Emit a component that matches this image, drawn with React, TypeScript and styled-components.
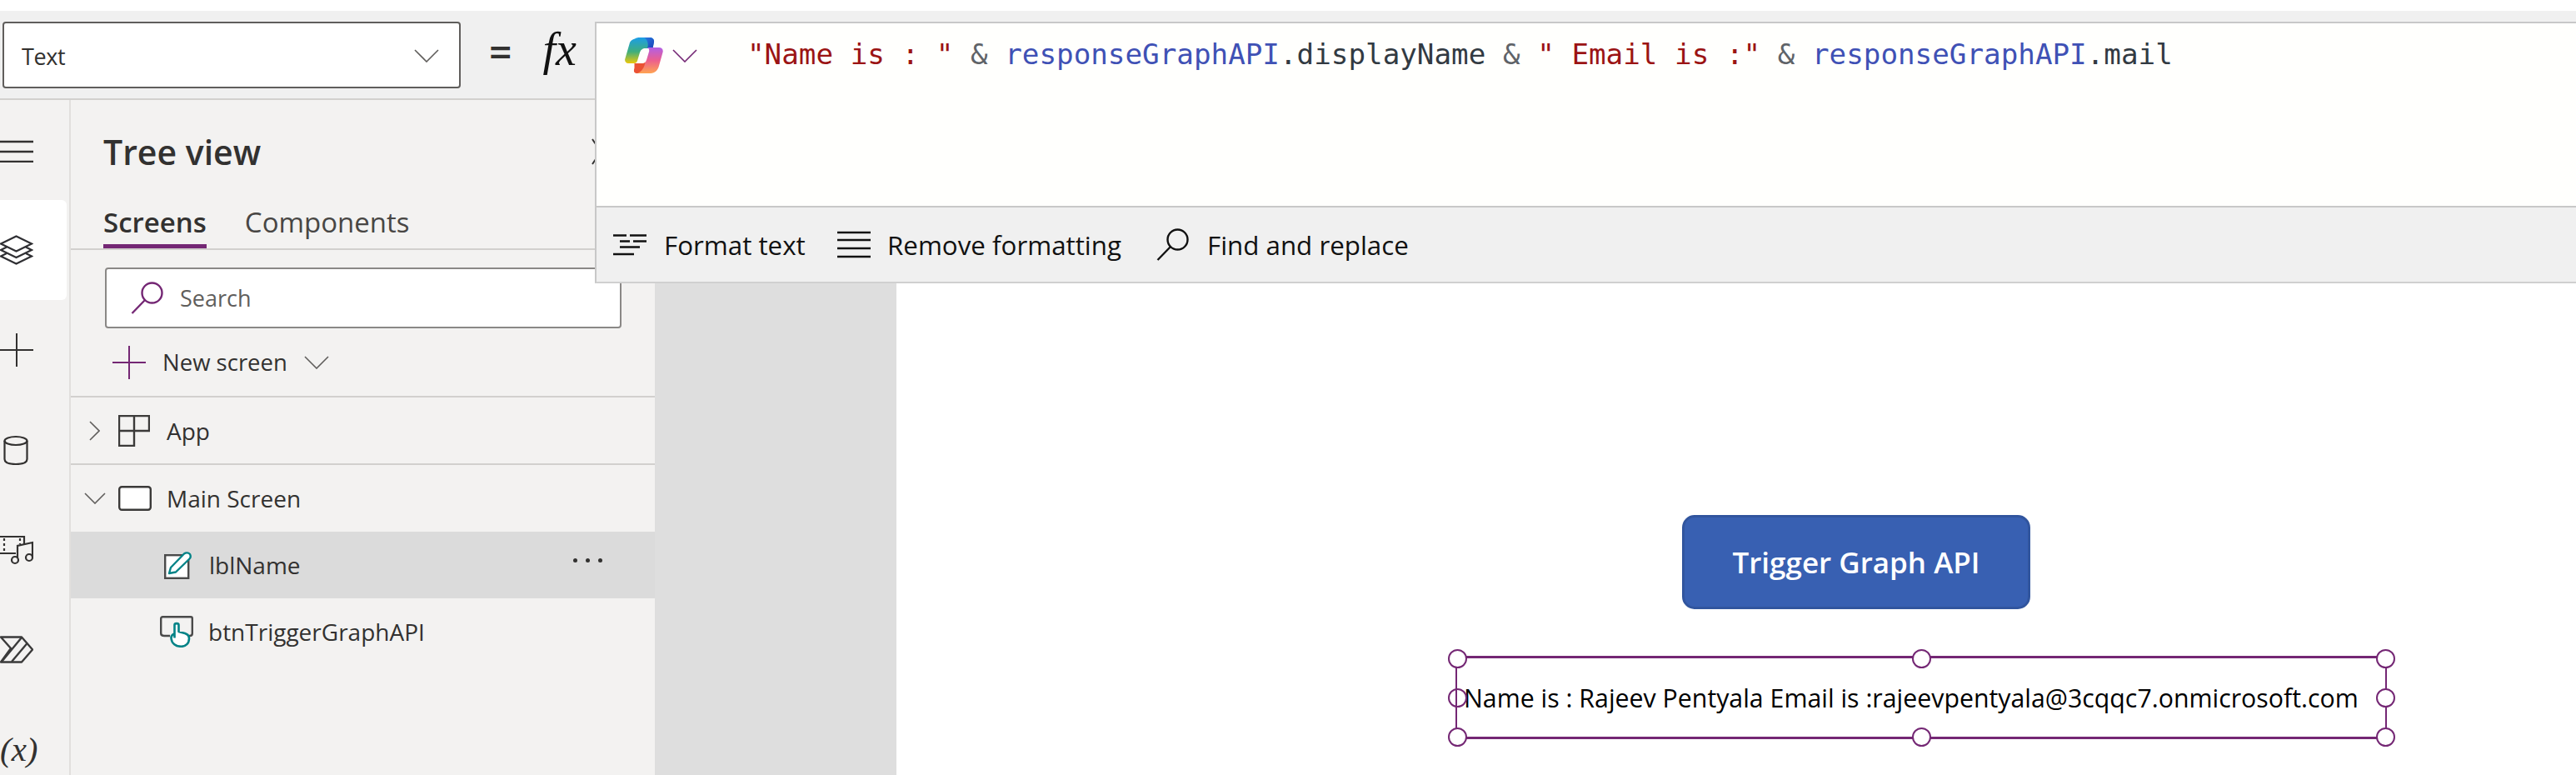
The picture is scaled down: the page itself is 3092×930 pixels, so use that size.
import React from "react";
import styled, { createGlobalStyle } from "styled-components";

const GlobalStyle = createGlobalStyle`
  html, body {
    margin: 0;
    padding: 0;
    background: #fff;
    font-family: "Open Sans", "Noto Sans", sans-serif;
  }
  * { box-sizing: border-box; }
`;

const Page = styled.div`
  position: relative;
  width: 3092px;
  height: 930px;
  padding-top: 13px;
  overflow: hidden;
  display: flex;
  flex-direction: column;
`;

// ---- formula bar ----
const FormulaBar = styled.div`
  height: 107px;
  flex: none;
  background: #f0f0f0;
  border-bottom: 2px solid #d2d0ce;
  padding: 13px 0 0 3px;
  display: flex;
  align-items: flex-start;
`;

const PropertySelect = styled.div`
  width: 550px;
  height: 80px;
  background: #fff;
  border: 2px solid #605e5c;
  border-radius: 4px;
  padding: 2px 24px 0 21px;
  display: flex;
  align-items: center;
  justify-content: space-between;
  font-size: 27px;
  letter-spacing: -0.4px;
  color: #323130;
`;

const Equals = styled.span`
  margin-left: 34px;
  font-size: 48px;
  font-weight: 600;
  line-height: 72px;
  color: #323130;
`;

const FxLabel = styled.span`
  margin-left: 37px;
  font-family: "Liberation Serif", serif;
  font-style: italic;
  font-size: 56px;
  line-height: 66px;
  color: #111;
`;

// ---- formula popover, lies over tree view and canvas ----
const FormulaPanel = styled.div`
  position: absolute;
  left: 714px;
  top: 26px;
  right: 0;
  height: 314px;
  display: flex;
  flex-direction: column;
  border: 2px solid #c8c8c8;
  border-right: none;
  border-bottom-color: #d0d0d0;
  background: #fffffd;
  z-index: 5;
`;

const EditorArea = styled.div`
  flex: 1;
  padding: 17px 0 0 34px;
  display: flex;
  align-items: flex-start;
`;

const CopilotButton = styled.div`
  display: flex;
  align-items: center;
  gap: 11px;
  width: 147px;
  flex: none;
`;

const Code = styled.div`
  font-family: "DejaVu Sans Mono", monospace;
  font-size: 34.24px;
  line-height: 40px;
  white-space: pre;
  color: #323a42;
`;

const Token = styled.span<{ $kind: "str" | "id" | "op" }>`
  color: ${(p) => (p.$kind === "str" ? "#9b1414" : p.$kind === "id" ? "#3f51b5" : "#5f6368")};
`;

const FormatBar = styled.div`
  height: 91px;
  flex: none;
  background: #f0f0f0;
  border-top: 2px solid #c8c8c8;
  padding-left: 20px;
  display: flex;
  align-items: center;
`;

const FormatAction = styled.div<{ $gap: number; $width: number }>`
  display: flex;
  align-items: center;
  gap: ${(p) => p.$gap}px;
  width: ${(p) => p.$width}px;
  flex: none;
  font-size: 31.3px;
  color: #111;
  white-space: nowrap;
`;

// ---- main area ----
const Main = styled.div`
  flex: 1;
  min-height: 0;
  display: flex;
`;

const Rail = styled.nav`
  width: 85px;
  flex: none;
  background: #f3f2f1;
  border-right: 2px solid #e1dfdd;
  display: flex;
  flex-direction: column;
`;

const RailItem = styled.div<{ $active?: boolean }>`
  width: 80px;
  height: 120px;
  flex: none;
  display: flex;
  align-items: center;
  background: ${(p) => (p.$active ? "#fff" : "transparent")};
  border-radius: 0 6px 6px 0;
  color: #323130;
`;

const VarGlyph = styled.span`
  font-family: "Liberation Serif", serif;
  font-style: italic;
  font-size: 41px;
  line-height: 1;
  color: #323130;
  margin-top: -2px;
`;

const TreePanel = styled.aside`
  width: 701px;
  flex: none;
  background: #f3f2f1;
  display: flex;
  flex-direction: column;
  color: #323130;
`;

const TreeHeader = styled.div`
  height: 120px;
  flex: none;
  padding: 4px 54px 0 39px;
  display: flex;
  align-items: center;
  justify-content: space-between;
  font-size: 41px;
  font-weight: 600;
`;

const TabRow = styled.div`
  height: 60px;
  flex: none;
  padding-left: 39px;
  border-bottom: 2px solid #d2d0ce;
  display: flex;
  gap: 46px;
`;

const Tab = styled.div<{ $active?: boolean }>`
  height: 58px;
  padding-top: 4px;
  font-size: 33px;
  line-height: 46px;
  font-weight: ${(p) => (p.$active ? 600 : 400)};
  color: ${(p) => (p.$active ? "#323130" : "#484644")};
  border-bottom: 5px solid ${(p) => (p.$active ? "#742774" : "transparent")};
`;

const SearchBox = styled.div`
  margin: 21px 0 0 41px;
  width: 620px;
  height: 73px;
  flex: none;
  background: #fff;
  border: 2px solid #8a8886;
  border-radius: 4px;
  padding-left: 29px;
  display: flex;
  align-items: center;
  gap: 20px;
  font-size: 27px;
  color: #605e5c;
`;

const NewScreenRow = styled.div`
  height: 83px;
  flex: none;
  padding-left: 50px;
  border-bottom: 2px solid #d2d0ce;
  display: flex;
  align-items: center;
  gap: 20px;
  font-size: 27.5px;
`;

const TreeRow = styled.div<{ $selected?: boolean; $divider?: boolean }>`
  position: relative;
  height: ${(p) => (p.$divider ? 81 : 80)}px;
  flex: none;
  display: flex;
  align-items: center;
  background: ${(p) => (p.$selected ? "#dbdbdb" : "transparent")};
  border-bottom: ${(p) => (p.$divider ? "2px solid #d2d0ce" : "none")};
  font-size: 28px;
  color: #323130;
`;

const Twisty = styled.span`
  width: 57px;
  flex: none;
  display: flex;
  justify-content: center;
`;

const RowLabel = styled.span<{ $left: number }>`
  margin-left: ${(p) => p.$left}px;
  white-space: nowrap;
`;

const RowIndent = styled.span<{ $width: number }>`
  width: ${(p) => p.$width}px;
  flex: none;
`;

const MoreDots = styled.span`
  position: absolute;
  right: 63px;
  top: 32px;
  display: flex;
  gap: 10px;
`;

const Dot = styled.i`
  width: 5px;
  height: 5px;
  border-radius: 50%;
  background: #323130;
`;

const Gutter = styled.div`
  width: 290px;
  flex: none;
  background: #dedede;
`;

const Canvas = styled.main`
  flex: 1;
  background: #fff;
  padding-top: 498px;
  display: flex;
  flex-direction: column;
`;

const TriggerButton = styled.div`
  margin-left: 943px;
  width: 418px;
  height: 113px;
  flex: none;
  background: #3860b2;
  border: 3px solid #31559e;
  border-radius: 15px;
  display: flex;
  align-items: center;
  justify-content: center;
  color: #fff;
  font-size: 35px;
  font-weight: 600;
`;

const SelectedLabel = styled.div`
  position: relative;
  margin: 56px 0 0 671px;
  width: 1118px;
  height: 100px;
  flex: none;
  border-style: solid;
  border-color: #742774;
  border-width: 3px 2px;
  padding-left: 8px;
  display: flex;
  align-items: center;
  font-size: 30.3px;
  color: #000;
  white-space: nowrap;
`;

const Handle = styled.span<{ $x: number; $y: number }>`
  position: absolute;
  left: ${(p) => p.$x}%;
  top: ${(p) => p.$y}%;
  width: 23px;
  height: 23px;
  margin: -11.5px 0 0 -11.5px;
  border: 2px solid #742774;
  border-radius: 50%;
  background: #fff;
`;

const HandleHollow = styled(Handle)`
  background: transparent;
`;

// ---- drawn icons ----
const Chevron = ({ w, h, dir = "down", color = "#605e5c" }: { w: number; h: number; dir?: "down" | "right"; color?: string }) => (
  <svg width={w} height={h} viewBox={`0 0 ${w} ${h}`} fill="none" stroke={color} strokeWidth="1.6">
    {dir === "down" ? (
      <path d={`M1 1L${w / 2} ${h - 1}L${w - 1} 1`} />
    ) : (
      <path d={`M1 1L${w - 1} ${h / 2}L1 ${h - 1}`} />
    )}
  </svg>
);

const PlusIcon = ({ color }: { color: string }) => (
  <svg width="40" height="40" viewBox="0 0 40 40" stroke={color} strokeWidth="2" fill="none">
    <path d="M0 20H40M20 0V40" />
  </svg>
);

const SearchIcon = ({ color, size }: { color: string; size: number }) => (
  <svg width={size} height={size} viewBox="0 0 39 39" fill="none" stroke={color} strokeWidth="2.4">
    <circle cx="25.5" cy="13.5" r="12" />
    <path d="M17 22L1.5 38" />
  </svg>
);

const HamburgerIcon = () => (
  <svg width="40" height="30" viewBox="0 0 40 30" stroke="#323130" strokeWidth="2.6">
    <path d="M0 5H40M0 17H40M0 29H40" />
  </svg>
);

const LayersIcon = () => (
  <svg width="40" height="36" viewBox="0 0 40 36" fill="none" stroke="#2f2f33" strokeWidth="2.2" strokeLinejoin="miter">
    <path d="M19.5 1.5L38 10.5L19.5 19.5L1 10.5Z" />
    <path d="M8 14.5L1 18L19.5 27L38 18L31 14.5" />
    <path d="M8 22L1 25.5L19.5 34.5L38 25.5L31 22" />
  </svg>
);

const CylinderIcon = () => (
  <svg width="40" height="36" viewBox="0 0 40 36" fill="none" stroke="#323130" strokeWidth="2.2">
    <ellipse cx="19" cy="7" rx="13.5" ry="5" />
    <path d="M5.5 7V29C5.5 33 10 35 19 35C28 35 32.5 33 32.5 29V7" />
  </svg>
);

const MediaIcon = () => (
  <svg width="40" height="36" viewBox="0 0 40 36" fill="none" stroke="#323130" strokeWidth="2.2">
    <path d="M0 2H29V11M19 22H0" />
    <path d="M5 4V20M24 4V11" strokeDasharray="3 3" />
    <path d="M21 28V13L39 9V26" />
    <circle cx="18" cy="30" r="4" />
    <circle cx="35" cy="27" r="4" />
  </svg>
);

const AutomateIcon = () => (
  <svg width="40" height="34" viewBox="0 0 40 34" fill="none" stroke="#3a3a3a" strokeWidth="2.4" strokeLinejoin="round">
    <path d="M1 1.5H26L39 16.5L26 31.5H1L13 15Z" />
    <path d="M26 2L2 31M33 8.5L14 31" />
  </svg>
);

const AppIcon = () => (
  <svg width="38" height="38" viewBox="0 0 38 38" fill="none" stroke="#3b3a39" strokeWidth="2.4">
    <path d="M1 1H37V19H19V37H1ZM1 19H19V1" />
  </svg>
);

const ScreenIcon = () => (
  <svg width="40" height="30" viewBox="0 0 40 30">
    <rect x="1.2" y="1.2" width="37.6" height="27.6" rx="3" fill="#fff" stroke="#3b3a39" strokeWidth="2.4" />
  </svg>
);

const LabelEditIcon = () => (
  <svg width="33" height="33" viewBox="0 0 33 33" fill="none">
    <rect x="1.2" y="4.2" width="28" height="27.6" fill="#fff" stroke="#4a4a4a" strokeWidth="2.4" />
    <path d="M6 26L8 19L24 2.5C26 1 29 1 31 3C32 5 32 7 30.5 8.5L14 24.5Z" fill="#fff" stroke="#038387" strokeWidth="2.4" strokeLinejoin="round" />
  </svg>
);

const ButtonTouchIcon = () => (
  <svg width="40" height="38" viewBox="0 0 40 38" fill="none">
    <path d="M12 24H5C3 24 1.2 23 1.2 21V3.2C1.2 2 2 1.2 3.2 1.2H37C38 1.2 38.8 2 38.8 3.2V21C38.8 23 38 24 36 24H35" stroke="#4a4a4a" strokeWidth="2.4" />
    <path d="M17.5 26.5V11C17.5 8.5 22.5 8.5 22.5 11V19L30 21C33 22 35 24 35 27C35 33 31 36.8 25.5 36.8C19 36.8 14 33 13.5 27C13.3 25 14.5 22.5 17.5 21.5" fill="#fff" stroke="#038387" strokeWidth="2.6" strokeLinejoin="round" />
  </svg>
);

const FormatTextIcon = () => (
  <svg width="40" height="26" viewBox="0 0 40 26" stroke="#111" strokeWidth="2.4">
    <path d="M0 1.5H16M20 1.5H40M8 8.5H20M24 8.5H40M8 15.5H32M0 24H25" />
  </svg>
);

const RemoveFormatIcon = () => (
  <svg width="40" height="34" viewBox="0 0 40 34" stroke="#111" strokeWidth="2.6">
    <path d="M0 2H40M0 11H40M0 21H40M0 31H40" />
  </svg>
);

const CopilotLogo = () => (
  <svg width="46" height="43" viewBox="0 0 46 43">
    <defs>
      <linearGradient id="leftBand" x1="0" y1="0" x2="0" y2="1">
        <stop offset="0" stopColor="#1b9de8" />
        <stop offset="0.55" stopColor="#3fae7c" />
        <stop offset="1" stopColor="#ecc80a" />
      </linearGradient>
      <linearGradient id="foldBlue" x1="0" y1="0" x2="1" y2="1">
        <stop offset="0" stopColor="#2a7ee0" />
        <stop offset="1" stopColor="#1a3fb8" />
      </linearGradient>
      <linearGradient id="rightBand" x1="0" y1="0" x2="0" y2="1">
        <stop offset="0" stopColor="#b25fe6" />
        <stop offset="0.5" stopColor="#ec5f8e" />
        <stop offset="1" stopColor="#ffa451" />
      </linearGradient>
    </defs>
    <path d="M12 1.5C13.5 0.5 15 0 18 0H30C33 0 35.5 2 35 5L33.5 13H25C21 13 19 15 18 18L15 28C14.4 30 13 31 11 31H4C1.5 31 -0.4 29 0.2 26L6 6C7 3.5 9 2.5 12 1.5Z" fill="url(#leftBand)" />
    <path d="M23 0H30C33.5 0 35.5 2.5 35 5.5L33.5 13H27C29 8 27 2 23 0Z" fill="url(#foldBlue)" />
    <path d="M27 12H41C44.5 12 46.3 14.5 45.6 17.5L41 34C39.5 39.5 36 43 31 43H15C12 43 10.5 41 11.5 38L13 32H20C23 32 25 30 26 27L29 17C29.6 15 28.8 13 27 12Z" fill="url(#rightBand)" />
    <path d="M11.5 31H20C22 31 23.6 30.5 24.6 29.5C23.5 35 21 41 15 43C11.5 43 10 41 11.5 37Z" fill="#ea5234" />
  </svg>
);

const TokenLine = () => (
  <Code>
    <Token $kind="str">"Name is : "</Token>
    <Token $kind="op"> &amp; </Token>
    <Token $kind="id">responseGraphAPI</Token>.displayName
    <Token $kind="op"> &amp; </Token>
    <Token $kind="str">" Email is :"</Token>
    <Token $kind="op"> &amp; </Token>
    <Token $kind="id">responseGraphAPI</Token>.mail
  </Code>
);

const handles: [number, number][] = [
  [0, 0],
  [50, 0],
  [100, 0],
  [0, 50],
  [100, 50],
  [0, 100],
  [50, 100],
  [100, 100],
];

export default function App() {
  return (
    <Page>
      <GlobalStyle />
      <FormulaBar>
        <PropertySelect>
          Text
          <Chevron w={30} h={16} />
        </PropertySelect>
        <Equals>=</Equals>
        <FxLabel>fx</FxLabel>
      </FormulaBar>

      <FormulaPanel>
        <EditorArea>
          <CopilotButton>
            <CopilotLogo />
            <Chevron w={30} h={16} color="#742774" />
          </CopilotButton>
          <TokenLine />
        </EditorArea>
        <FormatBar>
          <FormatAction $gap={21} $width={269}>
            <FormatTextIcon />
            Format text
          </FormatAction>
          <FormatAction $gap={20} $width={383}>
            <RemoveFormatIcon />
            Remove formatting
          </FormatAction>
          <FormatAction $gap={22} $width={320}>
            <SearchIcon color="#111" size={39} />
            Find and replace
          </FormatAction>
        </FormatBar>
      </FormulaPanel>

      <Main>
        <Rail>
          <RailItem><HamburgerIcon /></RailItem>
          <RailItem $active><LayersIcon /></RailItem>
          <RailItem><PlusIcon color="#323130" /></RailItem>
          <RailItem><CylinderIcon /></RailItem>
          <RailItem><MediaIcon /></RailItem>
          <RailItem><AutomateIcon /></RailItem>
          <RailItem><VarGlyph>(x)</VarGlyph></RailItem>
        </Rail>

        <TreePanel>
          <TreeHeader>
            Tree view
            <svg width="22" height="32" viewBox="0 0 22 32" fill="none" stroke="#323130" strokeWidth="2">
              <path d="M1 1L21 31M21 1L1 31" />
            </svg>
          </TreeHeader>
          <TabRow>
            <Tab $active>Screens</Tab>
            <Tab>Components</Tab>
          </TabRow>
          <SearchBox>
            <SearchIcon color="#742774" size={39} />
            Search
          </SearchBox>
          <NewScreenRow>
            <PlusIcon color="#742774" />
            New screen
            <Chevron w={30} h={16} />
          </NewScreenRow>
          <TreeRow $divider>
            <Twisty><Chevron w={13} h={24} dir="right" /></Twisty>
            <AppIcon />
            <RowLabel $left={20}>App</RowLabel>
          </TreeRow>
          <TreeRow>
            <Twisty><Chevron w={26} h={14} /></Twisty>
            <ScreenIcon />
            <RowLabel $left={18}>Main Screen</RowLabel>
          </TreeRow>
          <TreeRow $selected>
            <RowIndent $width={112} />
            <LabelEditIcon />
            <RowLabel $left={21}>lblName</RowLabel>
            <MoreDots><Dot /><Dot /><Dot /></MoreDots>
          </TreeRow>
          <TreeRow>
            <RowIndent $width={107} />
            <ButtonTouchIcon />
            <RowLabel $left={18}>btnTriggerGraphAPI</RowLabel>
          </TreeRow>
        </TreePanel>

        <Gutter />

        <Canvas>
          <TriggerButton>Trigger Graph API</TriggerButton>
          <SelectedLabel>
            Name is : Rajeev Pentyala Email is :rajeevpentyala@3cqqc7.onmicrosoft.com
            {handles.map(([x, y]) =>
              x === 0 && y === 50 ? (
                <HandleHollow key={`${x}-${y}`} $x={x} $y={y} />
              ) : (
                <Handle key={`${x}-${y}`} $x={x} $y={y} />
              )
            )}
          </SelectedLabel>
        </Canvas>
      </Main>
    </Page>
  );
}
